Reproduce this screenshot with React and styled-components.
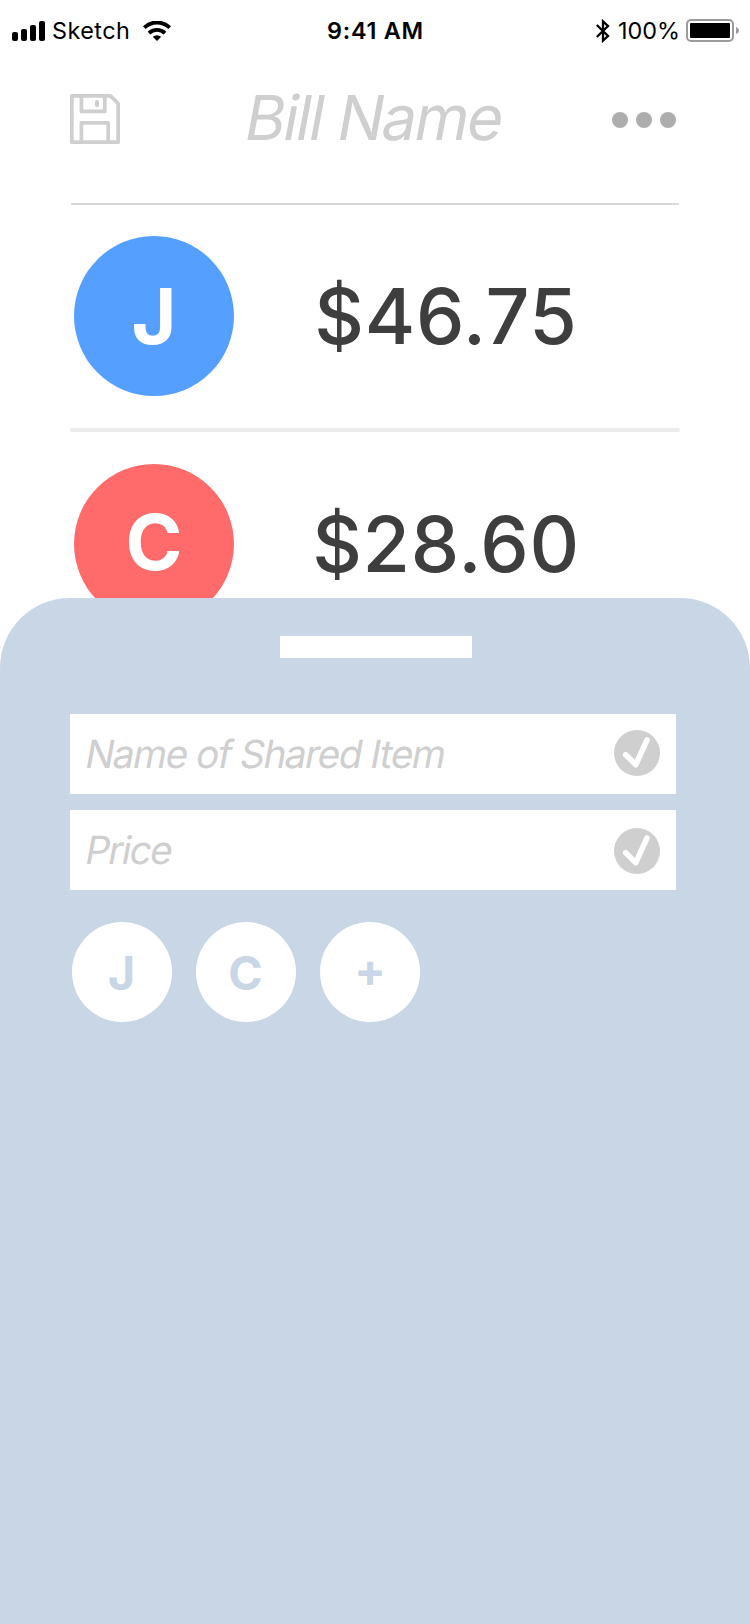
import React from 'react';
import styled, { createGlobalStyle } from 'styled-components';

const GlobalStyle = createGlobalStyle`
  *, *::before, *::after { box-sizing: border-box; }
  body { margin: 0; background: #fff; font-family: Inter, "Liberation Sans", sans-serif; }
`;

const Screen = styled.main`
  position: relative;
  width: 750px;
  height: 1624px;
  background: #fff;
  overflow: hidden;
`;

const StatusBar = styled.div`
  display: grid;
  grid-template-columns: 1fr auto 1fr;
  align-items: center;
  height: 61px;
  padding: 0 11px 0 12px;
  color: #000;
`;

const StatusGroup = styled.div`
  display: flex;
  align-items: center;
  justify-content: ${(p) => (p.$end ? 'flex-end' : 'flex-start')};
`;

const StatusText = styled.span`
  font-size: 23.4px;
  line-height: 28px;
  font-weight: ${(p) => p.$weight || 400};
  letter-spacing: ${(p) => p.$spacing || 0}px;
  margin: 0 ${(p) => p.$after || 0}px 0 ${(p) => p.$before || 0}px;
  white-space: nowrap;
`;

const Header = styled.header`
  display: flex;
  align-items: center;
  justify-content: space-between;
  height: 142px;
  padding: 0 74px 26px 70px;
`;

const Title = styled.h1`
  margin: 0 0 3px 17px;
  font-size: 62px;
  line-height: 72px;
  font-weight: 400;
  letter-spacing: -2.1px;
  color: #cfcfcf;
  white-space: nowrap;
  transform: skewX(-10.5deg);
`;

const IconButton = styled.button`
  display: flex;
  padding: ${(p) => p.$drop || 0}px 0 0;
  border: 0;
  background: none;
`;

const Divider = styled.hr`
  width: ${(p) => (p.$thick ? 610 : 608)}px;
  height: ${(p) => (p.$thick ? 4 : 2)}px;
  margin: 0 auto;
  border: 0;
  border-radius: 2px;
  background: ${(p) => (p.$thick ? '#ebebeb' : '#d8d8d8')};
`;

const PersonRow = styled.div`
  display: flex;
  align-items: center;
  padding: ${(p) => p.$top}px 70px 32px 74px;
`;

const Avatar = styled.div`
  display: flex;
  align-items: center;
  justify-content: center;
  width: 160px;
  height: 160px;
  padding-bottom: ${(p) => p.$lift}px;
  border-radius: 50%;
  background: ${(p) => p.$color};
  color: #fff;
  font-size: 77px;
  font-weight: 660;
`;

const Amount = styled.div`
  flex: 1;
  padding-right: 22px;
  text-align: center;
  font-size: 77px;
  line-height: 94px;
  font-weight: 500;
  letter-spacing: 0.7px;
  color: #3e3e3e;
`;

const Sheet = styled.section`
  position: absolute;
  left: 0;
  right: 0;
  bottom: 0;
  height: 1026px;
  padding: 38px 74px 0 70px;
  border-radius: 70px 70px 0 0;
  background: #c9d6e5;
`;

const Handle = styled.div`
  width: 192px;
  height: 22px;
  margin: 0 0 56px 210px;
  background: #fff;
`;

const Field = styled.div`
  display: flex;
  align-items: center;
  justify-content: space-between;
  height: 80px;
  margin-bottom: 16px;
  padding: 0 16px;
  background: #fff;
`;

const Placeholder = styled.span`
  font-size: 38.7px;
  line-height: 48px;
  font-weight: 400;
  letter-spacing: ${(p) => p.$spacing}px;
  color: #cfcfcf;
  white-space: nowrap;
  transform: skewX(-10.5deg);
`;

const CheckBadge = styled.svg`
  width: 46px;
  height: 46px;
  margin-bottom: ${(p) => p.$lift}px;
`;

const People = styled.div`
  display: flex;
  gap: 24px;
  padding: 16px 0 0 2px;
`;

const Chip = styled.button`
  display: flex;
  align-items: center;
  justify-content: center;
  width: 100px;
  height: 100px;
  padding: ${(p) => (p.$add ? '0 0 5px' : '2px 1px 0 0')};
  border: 0;
  border-radius: 50%;
  background: #fff;
  color: #c9d6e5;
  font-family: inherit;
  font-size: 46.5px;
  font-weight: 700;
`;

const SignalIcon = () => (
  <svg width="33" height="20" viewBox="0 0 33 20">
    <rect x="0" y="11" width="6" height="9" rx="2" />
    <rect x="9" y="8" width="6" height="12" rx="2" />
    <rect x="18" y="4" width="6" height="16" rx="2" />
    <rect x="27" y="0" width="6" height="20" rx="2" />
  </svg>
);

const WifiIcon = () => (
  <svg width="28" height="20" viewBox="0 0 28 20">
    <g fill="none" stroke="#000" strokeWidth="3.9">
      <path d="M1.3 6.7 A18.2 18.2 0 0 1 26.7 6.7" />
      <path d="M6 12.1 A11.6 11.6 0 0 1 22 12.1" />
    </g>
    <path d="M14 20 L9.8 15.8 A6.2 6.2 0 0 1 18.2 15.8 Z" />
  </svg>
);

const BluetoothIcon = () => (
  <svg width="14" height="24" viewBox="0 0 14 24" fill="none" stroke="#000" strokeWidth="2.3">
    <path d="M0.8 6 L12 17 L7 21.6 V2.4 L12 7 L0.8 18" />
  </svg>
);

const BatteryIcon = () => (
  <svg width="53" height="23" viewBox="0 0 53 23">
    <rect x="1" y="1" width="46" height="21" rx="4" fill="none" stroke="#9b9b9b" strokeWidth="2" />
    <rect x="4" y="4" width="40" height="15" rx="1" />
    <path d="M50 8 C52 8.8 53 10 53 11.5 C53 13 52 14.2 50 15 Z" fill="#9b9b9b" />
  </svg>
);

const SaveIcon = () => (
  <svg width="50" height="50" viewBox="0 0 50 50" fill="none" stroke="#cfcfcf" strokeWidth="3.7" strokeLinejoin="round" strokeLinecap="round">
    <path d="M1.85 1.85 H40.5 L48.15 9.5 V48.15 H1.85 Z" />
    <path d="M11.4 2 V17.4 H34.8 V2" />
    <path d="M11.4 48 V28.8 H38.2 V48" />
    <path d="M27 8 V11.2" strokeWidth="4" />
  </svg>
);

const MoreIcon = () => (
  <svg width="64" height="16" viewBox="0 0 64 16" fill="#adadad">
    <circle cx="8" cy="8" r="8" />
    <circle cx="32" cy="8" r="8" />
    <circle cx="56" cy="8" r="8" />
  </svg>
);

const Check = ({ lift }) => (
  <CheckBadge viewBox="0 0 46 46" $lift={lift}>
    <circle cx="23" cy="23" r="23" fill="#cfcfcf" />
    <path d="M11.7 24.8 L21.8 34.7 L33 10" fill="none" stroke="#fff" strokeWidth="5.6" strokeLinecap="round" strokeLinejoin="round" />
  </CheckBadge>
);

export default function App() {
  return (
    <>
      <GlobalStyle />
      <Screen>
        <StatusBar>
          <StatusGroup>
            <SignalIcon />
            <StatusText $before={7} $after={13} $spacing={0.45}>Sketch</StatusText>
            <WifiIcon />
          </StatusGroup>
          <StatusText $weight={600} $spacing={0.75}>9:41 AM</StatusText>
          <StatusGroup $end>
            <BluetoothIcon />
            <StatusText $before={8} $after={6}>100%</StatusText>
            <BatteryIcon />
          </StatusGroup>
        </StatusBar>
        <Header>
          <IconButton aria-label="Save"><SaveIcon /></IconButton>
          <Title>Bill Name</Title>
          <IconButton aria-label="More" $drop={2}><MoreIcon /></IconButton>
        </Header>
        <Divider />
        <PersonRow $top={31}>
          <Avatar $color="#549fff" $lift={1}>J</Avatar>
          <Amount>$46.75</Amount>
        </PersonRow>
        <Divider $thick />
        <PersonRow $top={32}>
          <Avatar $color="#ff6b6b" $lift={5}>C</Avatar>
          <Amount>$28.60</Amount>
        </PersonRow>
        <Sheet>
          <Handle />
          <Field>
            <Placeholder $spacing={-1.46}>Name of Shared Item</Placeholder>
            <Check lift={2} />
          </Field>
          <Field>
            <Placeholder $spacing={-1.6}>Price</Placeholder>
            <Check lift={-2} />
          </Field>
          <People>
            <Chip>J</Chip>
            <Chip>C</Chip>
            <Chip $add>+</Chip>
          </People>
        </Sheet>
      </Screen>
    </>
  );
}
